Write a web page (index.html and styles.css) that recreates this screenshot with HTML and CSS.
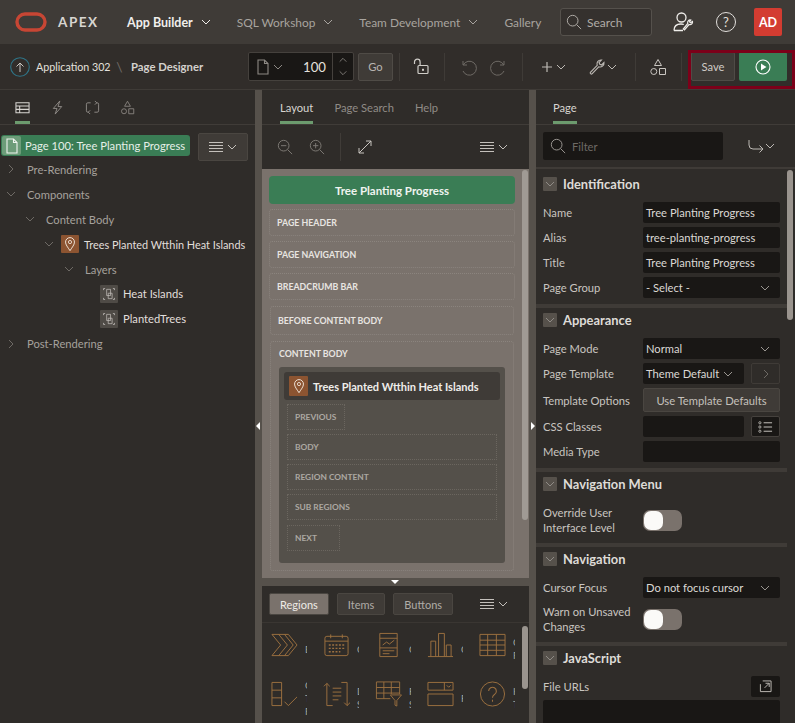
FILE: index.html
```html
<!DOCTYPE html>
<html lang="en">
<head>
<meta charset="utf-8">
<title>Page Designer</title>
<link rel="stylesheet" href="styles.css">
</head>
<body>
<svg class="defs" width="0" height="0" aria-hidden="true">
  <defs>
    <symbol id="chev" viewBox="0 0 12 12"><path d="M2 4l4 4 4-4" fill="none" stroke="currentColor" stroke-width="1"/></symbol>
    <symbol id="chevr" viewBox="0 0 12 12"><path d="M4 2l4 4-4 4" fill="none" stroke="currentColor" stroke-width="1"/></symbol>
    <symbol id="chevu" viewBox="0 0 12 12"><path d="M2 8l4-4 4 4" fill="none" stroke="currentColor" stroke-width="1"/></symbol>
    <symbol id="menu" viewBox="0 0 16 12"><path d="M1 1.500h14M1 4.500h14M1 7.500h14M1 10.500h14" fill="none" stroke="currentColor" stroke-width="1.200"/></symbol>
    <symbol id="shapes" viewBox="0 0 18 18"><path d="M9 1.500l3.500 6h-7zM10.500 10.500h6v6h-6z" fill="none" stroke="currentColor"/><circle cx="4.800" cy="13.500" r="3" fill="none" stroke="currentColor"/></symbol>
    <symbol id="mag" viewBox="0 0 18 18"><circle cx="7.500" cy="7.500" r="6" fill="none" stroke="currentColor" stroke-width="1.100"/><path d="M12 12l5 5" stroke="currentColor" stroke-width="1.100"/></symbol>
    <symbol id="zoomout" viewBox="0 0 18 18"><circle cx="7.500" cy="7.500" r="6" fill="none" stroke="currentColor" stroke-width="1.100"/><path d="M12 12l5 5M4.500 7.500h6" stroke="currentColor" stroke-width="1.100"/></symbol>
    <symbol id="zoomin" viewBox="0 0 18 18"><circle cx="7.500" cy="7.500" r="6" fill="none" stroke="currentColor" stroke-width="1.100"/><path d="M12 12l5 5M4.500 7.500h6M7.500 4.500v6" stroke="currentColor" stroke-width="1.100"/></symbol>
    <symbol id="page" viewBox="0 0 14 16"><path d="M2 1h6.500L12 4.500V15H2zM8.500 1v3.500H12" fill="none" stroke="currentColor" stroke-width="1.100"/></symbol>
    <symbol id="pin" viewBox="0 0 14 18"><path d="M7 16.500C4.500 12.500 2 10 2 6.800a5 5 0 0 1 10 0C12 10 9.500 12.500 7 16.500z" fill="none" stroke="currentColor" stroke-width="1.100"/><circle cx="7" cy="6.800" r="1.800" fill="none" stroke="currentColor"/></symbol>
    <symbol id="layer" viewBox="0 0 18 18"><path d="M2 2h2M14 2h2M2 16h2M14 16h2M2 2v2M16 2v2M2 14v2M16 14v2" stroke="currentColor"/><path d="M6 3h5v8H6zM8 8h5v7H8z" fill="none" stroke="currentColor" stroke-width=".9"/></symbol>
  </defs>
</svg>

<div class="app">
  <header class="topbar">
    <svg class="logo" viewBox="0 0 32 20" aria-hidden="true"><rect x="2" y="2" width="28" height="16" rx="8" fill="none" stroke="#c74634" stroke-width="3.400"/></svg>
    <span class="brand">APEX</span>
    <nav class="mainnav">
      <span class="navitem active">App Builder<svg class="ic12"><use href="#chev"/></svg></span>
      <span class="navitem">SQL Workshop<svg class="ic12"><use href="#chev"/></svg></span>
      <span class="navitem">Team Development<svg class="ic12"><use href="#chev"/></svg></span>
      <span class="navitem">Gallery</span>
    </nav>
    <div class="searchbox"><svg class="ic16"><use href="#mag"/></svg><span>Search</span></div>
    <svg class="usericon" viewBox="0 0 22 22" aria-hidden="true"><circle cx="9.500" cy="6.500" r="4.500" fill="none" stroke="currentColor" stroke-width="1.300"/><path d="M2 19.500c0-4.500 3-6.500 7-6.500 1 0 2 .2 2.800.5M2 19.500h9" fill="none" stroke="currentColor" stroke-width="1.300"/><path d="M20.500 10.500a2.600 2.600 0 0 1-3.500 3L12.500 19l-1.200-1 4.500-5.500a2.600 2.600 0 0 1 3-3.500l-1.300 1.700.9 1z" fill="none" stroke="currentColor" stroke-width="1.200"/></svg>
    <span class="helpicon">?</span>
    <span class="avatar">AD</span>
  </header>

  <div class="toolbar">
    <span class="upicon"><svg viewBox="0 0 20 20" aria-hidden="true"><circle cx="10" cy="10" r="9.300" fill="none" stroke="#2f7487" stroke-width="1.100"/><path d="M10 15V6M6.500 9.500L10 6l3.500 3.500" fill="none" stroke="#c9c6c2"/></svg></span>
    <span class="crumb">Application 302</span>
    <span class="crumbsep">\</span>
    <span class="crumbcur">Page Designer</span>
    <div class="pagesel">
      <svg class="pagei"><use href="#page"/></svg>
      <svg class="ic12"><use href="#chev"/></svg>
      <span class="pagenum">100</span>
      <span class="stepper"><svg class="ic10"><use href="#chevu"/></svg><svg class="ic10"><use href="#chev"/></svg></span>
    </div>
    <button class="btn go">Go</button>
    <i class="tsep s1"></i>
    <svg class="tool lock" viewBox="0 0 18 18" aria-hidden="true"><path d="M2.500 6V4a2.800 2.800 0 0 1 5.600 0v3" fill="none" stroke="currentColor" stroke-width="1.200"/><rect x="6" y="7.500" width="10" height="8" rx="1" fill="none" stroke="currentColor" stroke-width="1.200"/><rect x="10" y="10.800" width="2" height="2" fill="currentColor"/></svg>
    <i class="tsep s2"></i>
    <svg class="tool undo" viewBox="0 0 18 18" aria-hidden="true"><path d="M4 3v4h4M4.200 7A7 7 0 1 1 4 13" fill="none" stroke="currentColor"/></svg>
    <svg class="tool redo" viewBox="0 0 18 18" aria-hidden="true"><path d="M14 3v4h-4M13.800 7A7 7 0 1 0 14 13" fill="none" stroke="currentColor"/></svg>
    <i class="tsep s3"></i>
    <svg class="plus" viewBox="0 0 12 12" aria-hidden="true"><path d="M6 1v10M1 6h10" stroke="currentColor" stroke-width="1.200"/></svg>
    <svg class="ic12 plusc"><use href="#chev"/></svg>
    <svg class="tool wrench" viewBox="0 0 18 18" aria-hidden="true"><path d="M16 4.500a4 4 0 0 1-5.300 4.300L4 15.800c-.8.800-2.400-.6-1.600-1.500L9.200 7.300A4 4 0 0 1 13.500 2L11 4.500l.8 1.800 1.800.7z" fill="none" stroke="currentColor" stroke-width="1.100"/></svg>
    <svg class="ic12 wrc"><use href="#chev"/></svg>
    <i class="tsep s5"></i>
    <svg class="tool shp"><use href="#shapes"/></svg>
    <i class="tsep s6"></i>
    <button class="btn save">Save</button>
    <button class="run"><svg viewBox="0 0 16 16" aria-hidden="true"><circle cx="8" cy="8" r="7" fill="none" stroke="#fff" stroke-width="1.100"/><path d="M6 4.500l5.500 3.500L6 11.500z" fill="#fff"/></svg></button>
    <span class="highlight"></span>
  </div>

  <main class="workspace">
    <section class="left">
      <div class="tabs lefttabs">
        <span class="ltab on"><svg viewBox="0 0 16 14" aria-hidden="true"><path d="M1 2h14v10.500H1zM1 5.500h14M1 9h14M5 5.500v7" fill="none" stroke="currentColor" stroke-width="1.100"/></svg></span>
        <span class="ltab"><svg viewBox="0 0 16 16" aria-hidden="true"><path d="M10.500 1L3.500 9h4l-2 6 7-8h-4z" fill="none" stroke="currentColor"/></svg></span>
        <span class="ltab"><svg viewBox="0 0 16 16" aria-hidden="true"><path d="M6 3H3a1.500 1.500 0 0 0-1.500 1.500v7A1.500 1.500 0 0 0 3 13h1M10 13h3a1.500 1.500 0 0 0 1.500-1.500v-7A1.500 1.500 0 0 0 13 3h-1M10.500 1l2 2-2 2M5.500 11l-2 2 2 2" fill="none" stroke="currentColor"/></svg></span>
        <span class="ltab"><svg viewBox="0 0 18 18" aria-hidden="true"><use href="#shapes"/></svg></span>
      </div>
      <div class="tree">
        <div class="pagerow">
          <span class="pagebadge"><span class="pagechip"><svg viewBox="0 0 14 16" aria-hidden="true"><use href="#page"/></svg></span>Page 100: Tree Planting Progress</span>
          <span class="treemenu"><svg class="menui"><use href="#menu"/></svg><svg class="ic12"><use href="#chev"/></svg></span>
        </div>
        <div class="node d0"><svg class="ic12"><use href="#chevr"/></svg>Pre-Rendering</div>
        <div class="node d0"><svg class="ic12"><use href="#chev"/></svg>Components</div>
        <div class="node d1"><svg class="ic12"><use href="#chev"/></svg>Content Body</div>
        <div class="node d2 bright"><svg class="ic12"><use href="#chev"/></svg><span class="chip orange"><svg viewBox="0 0 14 18" aria-hidden="true"><use href="#pin"/></svg></span>Trees Planted Wtthin Heat Islands</div>
        <div class="node d3"><svg class="ic12"><use href="#chev"/></svg>Layers</div>
        <div class="node d4 bright"><span class="chip grey"><svg viewBox="0 0 18 18" aria-hidden="true"><use href="#layer"/></svg></span>Heat Islands</div>
        <div class="node d4 bright"><span class="chip grey"><svg viewBox="0 0 18 18" aria-hidden="true"><use href="#layer"/></svg></span>PlantedTrees</div>
        <div class="node d0"><svg class="ic12"><use href="#chevr"/></svg>Post-Rendering</div>
      </div>
    </section>

    <div class="splitter"><i class="tri tl"></i></div>

    <section class="center">
      <div class="tabs centertabs">
        <span class="ctab on">Layout</span>
        <span class="ctab">Page Search</span>
        <span class="ctab">Help</span>
      </div>
      <div class="ctools">
        <svg class="ic16 dim"><use href="#zoomout"/></svg>
        <svg class="ic16 dim"><use href="#zoomin"/></svg>
        <i class="ctsep"></i>
        <svg class="expand" viewBox="0 0 14 14" aria-hidden="true"><path d="M1 13L13 1M8 1h5v5M1 8v5h5" fill="none" stroke="currentColor"/></svg>
        <span class="spacer"></span>
        <svg class="menui"><use href="#menu"/></svg><svg class="ic12"><use href="#chev"/></svg>
      </div>
      <div class="canvas">
        <div class="canvasinner">
          <div class="pagetitle">Tree Planting Progress</div>
          <div class="slot">PAGE HEADER</div>
          <div class="slot">PAGE NAVIGATION</div>
          <div class="slot">BREADCRUMB BAR</div>
          <div class="slot inset slotbig">BEFORE CONTENT BODY</div>
          <div class="slot inset body">
            <span class="bodylabel">CONTENT BODY</span>
            <div class="region">
              <div class="regionhead"><span class="chip orange"><svg viewBox="0 0 14 18" aria-hidden="true"><use href="#pin"/></svg></span>Trees Planted Wtthin Heat Islands</div>
              <div class="rslot w1">PREVIOUS</div>
              <div class="rslot">BODY</div>
              <div class="rslot">REGION CONTENT</div>
              <div class="rslot">SUB REGIONS</div>
              <div class="rslot w2">NEXT</div>
            </div>
          </div>
        </div>
        <span class="scroll canvasscroll"></span>
      </div>
      <div class="hsplit"><i class="tri td"></i></div>
      <div class="gallery">
        <div class="gbar">
          <span class="gbtn on">Regions</span>
          <span class="gbtn">Items</span>
          <span class="gbtn">Buttons</span>
          <span class="spacer"></span>
          <svg class="menui"><use href="#menu"/></svg><svg class="ic12"><use href="#chev"/></svg>
        </div>
        <div class="ggrid">
          <div class="gcell"><svg viewBox="0 0 28 24" aria-hidden="true"><path d="M1 1h17l9 11-9 11H1l9-11zM8 1l9 11-9 11M14 1l9 11-9 11" fill="none" stroke="currentColor"/></svg><span class="glabel">Breadcrumb</span></div>
          <div class="gcell"><svg viewBox="0 0 28 24" aria-hidden="true"><rect x="2" y="3" width="24" height="20" rx="2" fill="none" stroke="currentColor"/><path d="M2 8h24M8 1v4M20 1v4" fill="none" stroke="currentColor"/><path d="M6 12h16M6 15.500h16M6 19h12" stroke="currentColor" stroke-width="1.500" stroke-dasharray="2 1.500"/></svg><span class="glabel">Calendar</span></div>
          <div class="gcell"><svg viewBox="0 0 28 26" aria-hidden="true"><path d="M5 1h18v24H5zM5 6h18M5 16h18M8 13l4-3 3 2 5-4M8 19h12M8 22h7" fill="none" stroke="currentColor"/></svg><span class="glabel">Cards</span></div>
          <div class="gcell"><svg viewBox="0 0 28 26" aria-hidden="true"><path d="M1 25h26M4 25V9h5v16M12 25V1h6v24M20 25V13h5v12" fill="none" stroke="currentColor"/></svg><span class="glabel">Chart</span></div>
          <div class="gcell"><svg viewBox="0 0 28 26" aria-hidden="true"><path d="M1 2h26v22H1zM1 8h26M1 13h26M1 18.500h26M9 2v22M18 2v22" fill="none" stroke="currentColor"/></svg><span class="glabel">Classic Report</span></div>
          <div class="gcell"><svg viewBox="0 0 28 26" aria-hidden="true"><path d="M1 1h10v24H1zM1 9h10M1 17h10M14 21l4 4 9-9" fill="none" stroke="currentColor"/></svg><span class="glabel">Column Toggle Report</span></div>
          <div class="gcell"><svg viewBox="0 0 28 26" aria-hidden="true"><path d="M4 25V2M1 5l3-3 3 3M25 1v24M22 22l3 3 3-3M4 25h6M19 1h6M10 7h9M10 11h9M10 15h9M10 19h6" fill="none" stroke="currentColor"/></svg><span class="glabel">Display Selector</span></div>
          <div class="gcell"><svg viewBox="0 0 28 28" aria-hidden="true"><path d="M16 19H1V1h25v13M1 7h25M1 13h25M9 1v18M17 1v13M16 15h12l-5 6v6l-2-1v-5z" fill="none" stroke="currentColor"/></svg><span class="glabel">Faceted Search</span></div>
          <div class="gcell"><svg viewBox="0 0 28 26" aria-hidden="true"><path d="M1 1h26v8H1zM1 13h26v12H1zM18 1v8M20.500 4l2 2 2-2" fill="none" stroke="currentColor"/></svg><span class="glabel">Form</span></div>
          <div class="gcell"><svg viewBox="0 0 28 26" aria-hidden="true"><circle cx="14" cy="13" r="12.500" fill="none" stroke="currentColor"/><path d="M10 10a4 4 0 1 1 6 3.500c-1.500 1-2 1.500-2 3.500M14 19v2" fill="none" stroke="currentColor" stroke-width="1.100"/></svg><span class="glabel">Help Text</span></div>
        </div>
        <span class="scroll gscroll"></span>
      </div>
    </section>

    <div class="splitter"><i class="tri tr"></i></div>

    <section class="right">
      <div class="tabs righttabs"><span class="ctab on">Page</span></div>
      <div class="rtools">
        <div class="filter"><svg class="ic16"><use href="#mag"/></svg><span>Filter</span></div>
        <svg class="goto" viewBox="0 0 16 14" aria-hidden="true"><path d="M1 1v5a4 4 0 0 0 4 4h10M11.500 6.500L15 10l-3.500 3.500" fill="none" stroke="currentColor"/></svg>
        <svg class="ic12"><use href="#chev"/></svg>
      </div>
      <div class="props">
        <div class="sechead first"><span class="togg"><svg class="ic12"><use href="#chev"/></svg></span>Identification</div>
        <div class="prow"><label>Name</label><span class="field">Tree Planting Progress</span></div>
        <div class="prow"><label>Alias</label><span class="field">tree-planting-progress</span></div>
        <div class="prow"><label>Title</label><span class="field">Tree Planting Progress</span></div>
        <div class="prow"><label>Page Group</label><span class="field sel">- Select -<svg class="ic12"><use href="#chev"/></svg></span></div>
        <div class="secbar"></div>
        <div class="sechead tight"><span class="togg"><svg class="ic12"><use href="#chev"/></svg></span>Appearance</div>
        <div class="prow"><label>Page Mode</label><span class="field sel">Normal<svg class="ic12"><use href="#chev"/></svg></span></div>
        <div class="prow"><label>Page Template</label><span class="field sel short">Theme Default<svg class="ic12"><use href="#chev"/></svg></span><span class="mini"><svg class="ic12"><use href="#chevr"/></svg></span></div>
        <div class="prow btnrow"><label>Template Options</label><span class="field tbtn">Use Template Defaults</span></div>
        <div class="prow"><label>CSS Classes</label><span class="field short"></span><span class="mini lit"><svg viewBox="0 0 16 12" aria-hidden="true"><path d="M6 1.500h9M6 6h9M6 10.500h9" stroke="currentColor"/><circle cx="2" cy="1.500" r="1.200" fill="none" stroke="currentColor" stroke-width=".8"/><circle cx="2" cy="6" r="1.200" fill="none" stroke="currentColor" stroke-width=".8"/><circle cx="2" cy="10.500" r="1.200" fill="none" stroke="currentColor" stroke-width=".8"/></svg></span></div>
        <div class="prow"><label>Media Type</label><span class="field"></span></div>
        <div class="secbar"></div>
        <div class="sechead"><span class="togg"><svg class="ic12"><use href="#chev"/></svg></span>Navigation Menu</div>
        <div class="prow two"><label>Override User<br>Interface Level</label><span class="toggle"><i></i></span></div>
        <div class="secbar"></div>
        <div class="sechead tight"><span class="togg"><svg class="ic12"><use href="#chev"/></svg></span>Navigation</div>
        <div class="prow"><label>Cursor Focus</label><span class="field sel">Do not focus cursor<svg class="ic12"><use href="#chev"/></svg></span></div>
        <div class="prow two"><label>Warn on Unsaved<br>Changes</label><span class="toggle"><i></i></span></div>
        <div class="secbar"></div>
        <div class="sechead tight"><span class="togg"><svg class="ic12"><use href="#chev"/></svg></span>JavaScript</div>
        <div class="prow files"><label>File URLs</label><span class="fileb"><svg viewBox="0 0 14 14" aria-hidden="true"><path d="M4 1h9v11.500H1.500V4.500M6 8.500L11 3.500M7 3.500h4v4" fill="none" stroke="currentColor"/></svg></span></div>
        <div class="textarea"></div>
        <span class="scroll propscroll"></span>
      </div>
    </section>
  </main>
</div>
</body>
</html>
```

FILE: styles.css
```css
* { box-sizing: border-box; }
html, body { margin: 0; height: 100%; }
body { font-family: Lato, "Noto Sans", sans-serif; font-size: 11.200px; color: #cfcbc6; background: #2f2c29; overflow: hidden; }
.defs { position: absolute; }
svg { display: block; flex: none; }
.ic12 { width: 12px; height: 12px; }
.ic10 { width: 10px; height: 10px; }
.ic16 { width: 16px; height: 16px; }
.spacer { flex: 1; }
.app { width: 795px; height: 723px; display: flex; flex-direction: column; }

.topbar { height: 44px; flex: none; background: #3f3b37; display: flex; align-items: center; padding-left: 15px; color: #c8c4bf; }
.logo { width: 32px; height: 20px; }
.brand { margin-left: 11px; width: 69px; font-weight: 700; font-size: 13.500px; letter-spacing: 1.500px; color: #d8d5d1; }
.mainnav { display: flex; align-items: center; width: 433px; }
.navitem { display: flex; align-items: center; gap: 7px; margin-right: 25px; color: #a8a49f; font-size: 11.900px; white-space: nowrap; }
.navitem.active { color: #f1efec; font-weight: 700; font-size: 12.500px; }
.searchbox { width: 92px; height: 28px; border: 1px solid #55514c; border-radius: 3px; background: #35312e; display: flex; align-items: center; gap: 5px; padding-left: 5px; color: #b0aca7; font-size: 12px; }
.usericon { width: 22px; height: 22px; margin-left: 20px; color: #efedea; }
.helpicon { width: 20px; height: 20px; margin-left: 22px; border: 1.300px solid #e3e0dd; border-radius: 50%; display: flex; align-items: center; justify-content: center; font-size: 13px; color: #e3e0dd; }
.avatar { width: 28px; height: 28px; margin-left: 18px; border-radius: 2px; background: #d33c31; color: #fff; font-weight: 700; font-size: 12.500px; display: flex; align-items: center; justify-content: center; }

.toolbar { height: 46px; flex: none; position: relative; background: #312d2a; border-bottom: 1px solid #3f3b37; display: flex; align-items: center; padding-left: 10px; color: #aaa6a1; }
.upicon { width: 20px; height: 20px; }
.crumb { margin-left: 6px; color: #e4e1dd; font-size: 10.700px; width: 77px; white-space: nowrap; }
.crumbsep { width: 13px; text-align: center; color: #6f6a65; font-size: 14px; }
.crumbcur { margin-left: 5px; color: #d4d1cd; font-weight: 700; font-size: 11.300px; width: 117px; white-space: nowrap; }
.pagesel { width: 106px; height: 29px; background: #191715; border: 1px solid #45413d; border-radius: 2px; display: flex; align-items: center; padding-left: 7px; color: #8d8984; }
.pagei { width: 14px; height: 16px; margin-right: 2px; }
.pagenum { flex: 1; text-align: right; color: #e4e1dd; font-size: 13.200px; padding-right: 6px; }
.stepper { width: 21px; height: 27px; border-left: 1px solid #45413d; display: flex; flex-direction: column; align-items: center; justify-content: center; gap: 3px; }
.btn { font-family: inherit; font-size: 11.200px; background: #3f3b37; border: 1px solid #4f4b46; border-radius: 2px; color: #b8b4af; padding: 0; }
.go { width: 35px; height: 28px; margin-left: 4px; }
.tsep { width: 1px; height: 28px; background: #3f3b37; flex: none; }
.s1 { margin-left: 6px; }
.tool { width: 18px; height: 18px; color: #a09c97; }
.lock { margin-left: 12px; color: #d0cdc8; }
.s2 { margin-left: 14px; }
.undo { margin-left: 14px; color: #6e6a65; }
.redo { margin-left: 13px; color: #6e6a65; }
.s3 { margin-left: 14px; }
.plus { width: 12px; height: 12px; margin-left: 18px; color: #bdb9b4; }
.plusc { margin-left: 2px; color: #bdb9b4; }
.wrench { margin-left: 21px; color: #bdb9b4; }
.wrc { margin-left: 0; color: #bdb9b4; }
.s5 { margin-left: 17px; }
.shp { margin-left: 13px; color: #c9c5c0; }
.s6 { margin-left: 14px; }
.save { width: 44px; height: 29px; margin-left: 9px; color: #cfcbc6; }
.run { width: 48px; height: 29px; margin-left: 4px; border: 0; border-radius: 2px; background: #3a7d55; display: flex; align-items: center; justify-content: center; padding: 0; }
.run svg { width: 16px; height: 16px; }
.highlight { position: absolute; left: 688px; top: 6px; width: 107px; height: 39px; border: 3px solid #7c0019; pointer-events: none; }

.workspace { flex: 1; min-height: 0; display: flex; }
.splitter { width: 7px; flex: none; background: #56514b; position: relative; }
.tri { position: absolute; width: 0; height: 0; border-style: solid; }
.tl { left: 1px; top: 332px; border-width: 4px 4px 4px 0; border-color: transparent #fff transparent transparent; }
.tr { left: 2px; top: 332px; border-width: 4px 0 4px 4px; border-color: transparent transparent transparent #fff; }
.td { left: 129px; top: 2px; border-width: 4px 4px 0 4px; border-color: #fff transparent transparent transparent; }

.tabs { height: 35px; flex: none; display: flex; align-items: stretch; border-bottom: 1px solid #403c38; }
.left { width: 255px; flex: none; display: flex; flex-direction: column; background: #2f2c29; }
.lefttabs { padding-left: 15px; gap: 20px; }
.ltab { width: 15px; display: flex; align-items: center; color: #908c87; }
.ltab svg { width: 15px; height: 15px; }
.ltab.on { color: #d8d5d1; box-shadow: inset 0 -3px 0 #6c9b6e; }
.tree { padding-top: 7px; }
.pagerow { display: flex; align-items: center; padding-left: 1px; height: 29px; margin-bottom: -4px; }
.pagebadge { width: 189px; height: 21px; margin-bottom: 2px; background: #3a7d55; border-radius: 3px; color: #e6efe8; display: flex; align-items: center; white-space: nowrap; }
.pagechip { width: 19px; height: 19px; margin: 0 4px 0 1px; background: #6d9c79; border-radius: 2px; display: flex; align-items: center; justify-content: center; color: #eef3ee; }
.pagechip svg { width: 14px; height: 16px; }
.treemenu { width: 50px; height: 28px; margin-left: 8px; background: #3f3b37; border: 1px solid #4a4641; border-radius: 2px; display: flex; align-items: center; justify-content: center; gap: 2px; color: #c4c0bb; }
.menui { width: 16px; height: 12px; }
.node { height: 24.900px; display: flex; align-items: center; color: #a5a19c; white-space: nowrap; }
.node > .ic12 { color: #6e6a65; margin-right: 10px; }
.node.bright { color: #e2dfdb; }
.d0 { padding-left: 5px; }
.d1 { padding-left: 24px; }
.d2 { padding-left: 43px; font-size: 10.900px; }
.node.d2 > .ic12 { margin-right: 6px; }
.d3 { padding-left: 63px; }
.d4 { padding-left: 100px; }
.chip { width: 18px; height: 18px; border-radius: 1px; display: flex; align-items: center; justify-content: center; flex: none; margin-right: 5px; }
.chip svg { width: 14px; height: 16px; }
.orange { background: #8c5431; color: #efe3d8; }
.grey { background: #4f4b46; color: #c7c3be; }

.center { width: 267px; flex: none; display: flex; flex-direction: column; background: #2f2c29; min-height: 0; }
.centertabs { padding-left: 18px; gap: 21px; }
.ctab { display: flex; align-items: center; color: #8f8b86; }
.ctab.on { color: #d8d5d1; box-shadow: inset 0 -3px 0 #6c9b6e; }
.ctools { height: 44px; flex: none; display: flex; align-items: center; padding: 0 20px 0 15px; color: #c4c0bb; gap: 2px; }
.ctools .ic16 { margin-right: 14px; }
.dim { color: #7d7974; }
.ctsep { width: 1px; height: 28px; background: #403c38; margin-right: 15px; margin-left: -1px; }
.expand { width: 14px; height: 14px; color: #c9c5c0; }
.canvas { height: 409px; flex: none; background: #7a726c; position: relative; overflow: hidden; }
.canvasinner { padding: 7px 14px 0 7px; display: flex; flex-direction: column; }
.pagetitle { height: 28px; background: #3a7d55; border-radius: 4px; color: #f0f4f0; font-weight: 700; font-size: 11.500px; display: flex; align-items: center; justify-content: center; margin-bottom: 5px; }
.slot { height: 27px; border: 1px dotted #8b847e; border-radius: 3px; margin-bottom: 5px; padding-left: 7px; display: flex; align-items: center; color: #e8e5e1; font-size: 8.800px; font-weight: 700; white-space: nowrap; }
.inset { margin-left: 1px; margin-right: 1px; }
.slotbig { height: 29px; margin-top: 1px; margin-bottom: 6px; }
.body { display: block; height: 230px; padding: 6px 8px 0; margin-top: 0; }
.bodylabel { display: block; line-height: 12px; color: #e8e5e1; }
.region { margin-top: 7px; height: 196px; background: #54504a; border-radius: 3px; padding: 5px 5px 0; display: flex; flex-direction: column; }
.regionhead { height: 28px; flex: none; background: #3f3b37; border-radius: 3px; display: flex; align-items: center; padding-left: 5px; color: #efedea; font-size: 11px; font-weight: 700; white-space: nowrap; margin-bottom: 4px; }
.regionhead .chip { width: 19px; height: 20px; margin-right: 5px; }
.rslot { height: 26px; flex: none; margin: 0 3px 4px 3px; padding-left: 7px; border: 1px dotted #6b665f; display: flex; align-items: center; color: #aca8a2; font-size: 8.400px; }
.w1 { width: 58px; }
.w2 { width: 53px; margin-top: 1px; }
.scroll { position: absolute; width: 6px; border-radius: 3px; background: #9a948e; }
.canvasscroll { left: 260px; top: 1px; height: 350px; background: #a09a94; }
.hsplit { height: 8px; flex: none; background: #56514b; position: relative; }
.gallery { flex: 1; min-height: 0; position: relative; overflow: hidden; background: #2f2c29; }
.gbar { height: 37px; border-bottom: 1px solid #3a3632; display: flex; align-items: center; padding: 0 20px 0 7px; color: #c4c0bb; gap: 2px; }
.gbtn { height: 22px; padding: 0 10px; margin-right: 6px; background: #3f3b37; border: 1px solid #4a4641; border-radius: 2px; display: flex; align-items: center; color: #b0aca7; font-size: 11px; }
.gbtn.on { background: #7a726c; color: #eeebe7; }
.ggrid { display: grid; grid-template-columns: repeat(5, 52px); grid-auto-rows: 49px; padding-left: 9px; }
.gcell { display: flex; align-items: flex-start; padding-top: 9px; color: #9c7040; overflow: hidden; }
.gcell svg { width: 27px; height: 26px; }
.glabel { width: 2px; align-self: center; margin: -6px 0 0 7px; overflow: hidden; color: #a8a49f; font-size: 9.500px; line-height: 13px; word-spacing: 30px; flex: none; }
.gscroll { left: 260px; top: 40px; height: 63px; }

.right { flex: 1; display: flex; flex-direction: column; min-width: 0; background: #2f2c29; }
.righttabs { padding-left: 17px; }
.rtools { height: 44px; flex: none; display: flex; align-items: center; padding-left: 7px; color: #bdb9b4; border-bottom: 2px solid #3f3b37; }
.filter { width: 180px; height: 28px; background: #191715; border-radius: 2px; display: flex; align-items: center; gap: 6px; padding-left: 7px; color: #6e6a65; }
.filter .ic16 { color: #9a9691; }
.goto { width: 16px; height: 14px; margin-left: 25px; }
.props { flex: 1; min-height: 0; position: relative; overflow: hidden; padding-right: 8px; }
.sechead { height: 24px; margin-bottom: 5px; display: flex; align-items: center; padding-left: 7px; color: #dedbd7; font-size: 12.900px; font-weight: 700; }
.sechead.first { margin-top: 3px; margin-bottom: 4px; }
.sechead.tight { margin-bottom: 4px; }
.togg { width: 14px; height: 14px; margin-right: 6px; background: #56514b; border-radius: 1px; display: flex; align-items: center; justify-content: center; color: #8f8b86; }
.prow { height: 25px; display: flex; align-items: center; padding-left: 7px; }
.prow label { width: 100px; flex: none; color: #c9c5c0; white-space: nowrap; line-height: 15px; }
.field { width: 137px; height: 21px; background: #191715; border-radius: 2px; display: flex; align-items: center; padding: 0 9px 0 3px; color: #dbd8d4; white-space: nowrap; }
.sel { justify-content: space-between; }
.sel .ic12 { color: #9a9691; }
.short { width: 101px; }
.short.sel { padding-right: 10px; }
.mini { width: 29px; height: 21px; margin-left: 7px; border: 1px solid #3f3b37; border-radius: 2px; display: flex; align-items: center; justify-content: center; color: #6e6a65; }
.mini.lit { background: #191715; color: #d0cdc8; border-color: #45413d; }
.mini svg[viewBox] { width: 15px; height: 12px; }
.btnrow { height: 28px; }
.tbtn { height: 24px; background: #3f3b37; border: 1px solid #4a4641; justify-content: center; color: #c4c0bb; padding: 0; }
.secbar { height: 4px; background: #3f3b37; margin-top: 4px; }
.two { height: 38px; }
.toggle { width: 39px; height: 21px; border-radius: 7px; background: #7a726c; padding: 1px; display: block; }
.toggle i { display: block; width: 19px; height: 19px; border-radius: 7px; background: #fbfaf8; }
.files { justify-content: space-between; padding-right: 7px; margin-bottom: 1px; }
.fileb { width: 29px; height: 21px; background: #191715; border-radius: 2px; display: flex; align-items: center; justify-content: center; color: #c4c0bb; }
.fileb svg { width: 13px; height: 13px; }
.textarea { height: 30px; margin: 0 7px; background: #191715; border-radius: 2px; }
.propscroll { left: 251px; top: 1px; height: 150px; }
```
